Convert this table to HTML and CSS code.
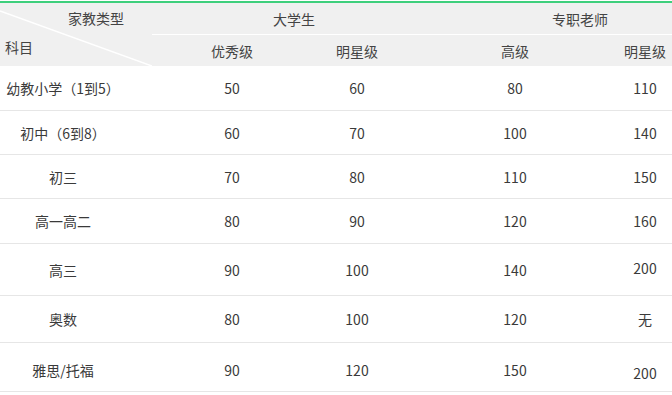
FILE: index.html
```html
<!DOCTYPE html>
<html lang="zh">
<head>
<meta charset="utf-8">
<link rel="stylesheet" href="styles.css">
</head>
<body>
<div class="viewport">
  <div class="table">
    <div class="head">
      <div class="diag">
        <svg class="diag-line" width="152" height="63" viewBox="0 0 152 63"><line x1="0" y1="8" x2="152" y2="63" stroke="#ffffff" stroke-width="1.5"/></svg>
        <span class="diag-top">家教类型</span>
        <span class="diag-bottom">科目</span>
      </div>
      <div class="grp grp-a">大学生</div>
      <div class="grp grp-b">专职老师</div>
      <div class="cell c2 sub">优秀级</div>
      <div class="cell c3 sub">明星级</div>
      <div class="cell c4 sub">高级</div>
      <div class="cell c5 sub">明星级</div>
    </div>

    <div class="row h45">
      <div class="cell c1">幼教小学（1到5）</div>
      <div class="cell c2">50</div><div class="cell c3">60</div><div class="cell c4">80</div><div class="cell c5">110</div>
    </div>
    <div class="row h44">
      <div class="cell c1">初中（6到8）</div>
      <div class="cell c2">60</div><div class="cell c3">70</div><div class="cell c4">100</div><div class="cell c5">140</div>
    </div>
    <div class="row h44">
      <div class="cell c1">初三</div>
      <div class="cell c2">70</div><div class="cell c3">80</div><div class="cell c4">110</div><div class="cell c5">150</div>
    </div>
    <div class="row h45">
      <div class="cell c1">高一高二</div>
      <div class="cell c2">80</div><div class="cell c3">90</div><div class="cell c4">120</div><div class="cell c5">160</div>
    </div>
    <div class="row h52">
      <div class="cell c1">高三</div>
      <div class="cell c2">90</div><div class="cell c3">100</div><div class="cell c4">140</div><div class="cell c5 up">200</div>
    </div>
    <div class="row h47">
      <div class="cell c1">奥数</div>
      <div class="cell c2">80</div><div class="cell c3">100</div><div class="cell c4">120</div><div class="cell c5">无</div>
    </div>
    <div class="row h49 shift">
      <div class="cell c1">雅思/托福</div>
      <div class="cell c2">90</div><div class="cell c3">120</div><div class="cell c4">150</div><div class="cell c5 down">200</div>
    </div>
  </div>
</div>
</body>
</html>
```

FILE: styles.css
```css
html, body {
  margin: 0;
  padding: 0;
  background: #ffffff;
}

.viewport {
  width: 672px;
  height: 395px;
  overflow: hidden;
  padding-top: 1px;
  box-sizing: border-box;
}

.table {
  width: 724px;
  border-top: 2px solid #3ecf7c;
  font-family: "Noto Sans CJK SC", "Noto Sans", sans-serif;
  font-size: 14px;
  line-height: 20px;
  color: #3a3a3a;
}

.head {
  display: grid;
  grid-template-columns: 152px 143px 141px 144px 144px;
  grid-template-rows: 32px 31px;
  background: #f0f0f0;
  color: #444;
}

.diag {
  grid-row: 1 / 3;
  grid-column: 1;
  position: relative;
  display: flex;
  flex-direction: column;
  justify-content: space-between;
  padding: 5px 28px 9px 5px;
}

.diag-line {
  position: absolute;
  left: 0;
  top: 0;
}

.diag-top {
  align-self: flex-end;
  position: relative;
}

.diag-bottom {
  align-self: flex-start;
  position: relative;
}

.grp {
  grid-row: 1;
  display: flex;
  align-items: center;
  justify-content: center;
  border-bottom: 1px solid #ffffff;
  box-sizing: border-box;
}

.grp-a { grid-column: 2 / 4; }
.grp-b { grid-column: 4 / 6; }

.sub { grid-row: 2; }

.row {
  display: grid;
  grid-template-columns: 152px 143px 141px 144px 144px;
  border-bottom: 1px solid #e6e6e6;
  box-sizing: border-box;
}

.h44 { height: 44px; }
.h45 { height: 45px; }
.h47 { height: 47px; }
.h49 { height: 49px; }
.h52 { height: 52px; }

.cell {
  display: flex;
  align-items: center;
  justify-content: center;
  white-space: nowrap;
}

.c1 { padding-right: 26px; }
.c2 { padding-left: 17px; }
.c3 { padding-right: 17px; }
.c4 { padding-left: 14px; }
.c5 { padding-right: 14px; }

.shift .cell { padding-top: 5px; }
.up { padding-bottom: 4px; }
.shift .down { padding-top: 11px; }
```
